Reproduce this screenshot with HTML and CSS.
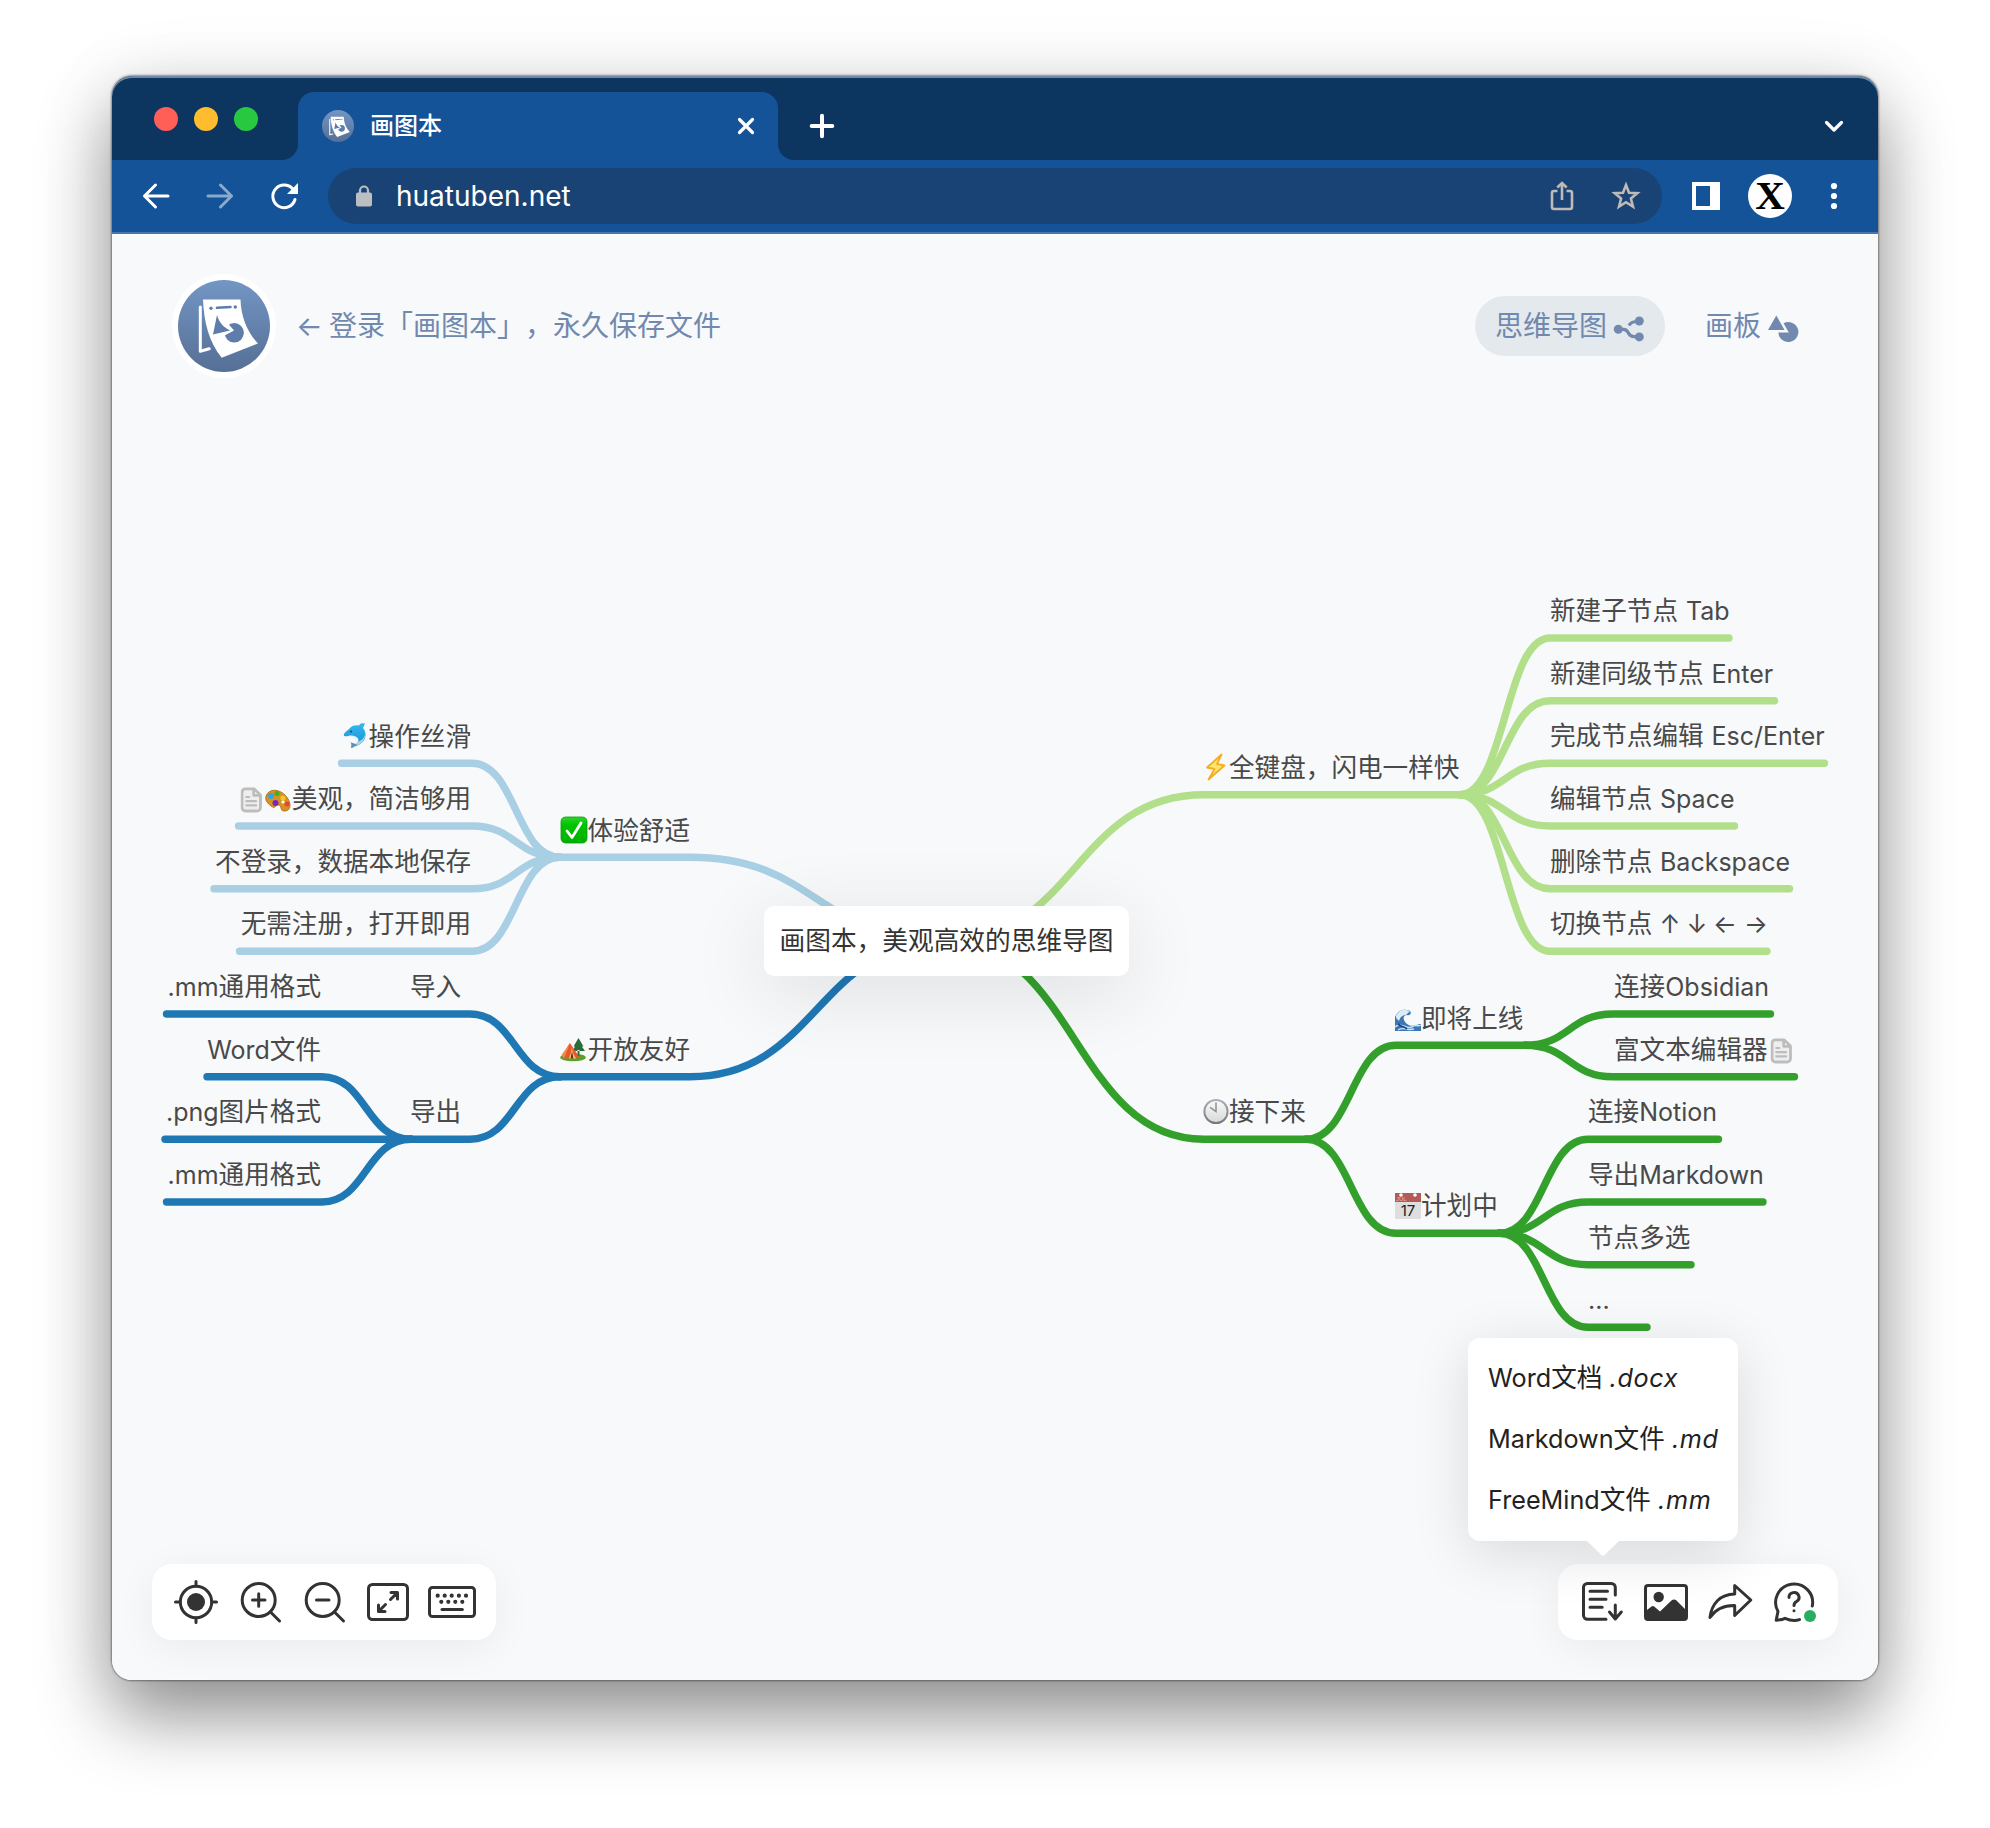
FILE: index.html
```html
<!DOCTYPE html>
<html lang="zh-CN">
<head>
<meta charset="utf-8">
<title>画图本</title>
<link rel="stylesheet" href="styles.css">
</head>
<body>
<svg class="defs" width="0" height="0" aria-hidden="true">
  <defs>
    <linearGradient id="logo-bg" x1="0" y1="0" x2="0" y2="1"><stop offset="0" stop-color="#7396c4"/><stop offset="1" stop-color="#566f96"/></linearGradient>
    <linearGradient id="check-bg" x1="0" y1="0" x2="0" y2="1"><stop offset="0" stop-color="#2fd52f"/><stop offset=".3" stop-color="#00c400"/><stop offset="1" stop-color="#00b000"/></linearGradient>
    <linearGradient id="clock-rim" x1="0" y1="0" x2="0" y2="1"><stop offset="0" stop-color="#a9afbb"/><stop offset="1" stop-color="#777"/></linearGradient>
    <linearGradient id="clock-face" x1="0" y1="0" x2="0" y2="1"><stop offset="0" stop-color="#fafafa"/><stop offset="1" stop-color="#d8d8d8"/></linearGradient>
    <linearGradient id="dolphin-skin" x1="0" y1="0" x2="0" y2="1"><stop offset="0" stop-color="#35b8ef"/><stop offset="1" stop-color="#1690cf"/></linearGradient>
    <symbol id="logo" viewBox="-46 -46 92 92">
      <circle r="46" fill="url(#logo-bg)"/>
      <path d="M-23.7-19V25.3L-14.8 22.8" fill="none" stroke="#fff" stroke-width="3" stroke-linecap="round" stroke-linejoin="round"/>
      <path d="M-21-26.5H16.5C17-8 24 7 34 17.5L-2.3 31.7C-15 16-20-3-21-26.5Z" fill="#fff"/>
      <g fill="#5f7dab"><circle cx="-13" cy="-17.7" r="1.7"/><circle cx="11.3" cy="-19" r="1.7"/><circle cx="10.2" cy="6.8" r="9.7"/></g>
      <path d="M-7-18.2L6.5-19" stroke="#5f7dab" stroke-width="2.6" stroke-linecap="round"/>
      <path d="M-6-14L10 4.5L-4 12L-14 10Z" fill="#fff"/>
      <path d="M-7-11L-11 8.5L6 4.5C-1 1-5-4-7-11Z" fill="#5f7dab"/>
    </symbol>
    <symbol id="note" viewBox="0 0 22 26">
      <path d="M5 1.8H13.5L20 8V20.5a3.5 3.5 0 0 1-3.5 3.5H5a3.5 3.5 0 0 1-3.5-3.5V5.3A3.5 3.5 0 0 1 5 1.8ZM13.2 2V8.3H20" fill="#eee" stroke="#bdbdbd" stroke-width="2.8" stroke-linejoin="round"/>
      <path d="M5.8 10h3M5.8 14.2h9.8M5.8 18.4h9.8" stroke="#bdbdbd" stroke-width="2.2" stroke-linecap="round"/>
    </symbol>
  </defs>
</svg>

<main class="window">
  <header class="tabstrip">
    <div class="lights"><i class="light red"></i><i class="light yellow"></i><i class="light green"></i></div>
    <div class="tab">
      <svg class="favicon"><use href="#logo"/></svg>
      <span class="tab-title">画图本</span>
      <svg class="tab-close" viewBox="-10 -10 20 20"><path d="M-6.5-6.5L6.5 6.5M6.5-6.5L-6.5 6.5"/></svg>
    </div>
    <svg class="new-tab" viewBox="-14 -14 28 28"><path d="M-10.3 0H10.3M0-10.3V10.3"/></svg>
    <svg class="tab-menu" viewBox="-12 -12 24 24"><path d="M-7.5-3.5L0 4L7.5-3.5"/></svg>
  </header>

  <nav class="toolbar">
    <svg class="nav-icon" viewBox="-16 -16 32 32"><path d="M12 0H-11.5M-.5-11L-11.5 0L-.5 11"/></svg>
    <svg class="nav-icon dim" viewBox="-16 -16 32 32"><path d="M-12 0H11.5M.5-11L11.5 0L.5 11"/></svg>
    <svg class="nav-icon" viewBox="-16 -16 32 32"><path d="M9.5-6A11.3 11.3 0 1 0 11 3.5"/><path d="M14-13V-2H3Z" class="solid"/></svg>
    <div class="omnibox">
      <svg class="lock" viewBox="0 0 16 22"><rect y="7.5" width="16" height="14" rx="2"/><path d="M4 8V5.5a4 4 0 0 1 8 0V8"/></svg>
      <span class="url">huatuben.net</span>
      <svg class="share" viewBox="-12 -16 24 32"><path d="M-4.500-5H-8a2 2 0 0 0-2 2V11a2 2 0 0 0 2 2H8a2 2 0 0 0 2-2V-3a2 2 0 0 0-2-2H4.500M0 4V-13M-4.700-8.500L0-13L4.700-8.500"/></svg>
      <svg class="star" viewBox="-16 -16 32 32"><path d="M0-11L3-3.300L11.300-2.800L4.900 2.500L7 10.700L0 6.200L-7 10.700L-4.900 2.500L-11.300-2.800L-3-3.300Z"/></svg>
    </div>
    <svg class="panel" viewBox="0 0 28 28"><path fill-rule="evenodd" d="M0 0H28V28H0ZM4 4V24H18V4Z"/></svg>
    <div class="avatar"><span>X</span></div>
    <svg class="kebab" viewBox="0 0 8 28"><circle cx="4" cy="4" r="3.100"/><circle cx="4" cy="14" r="3.100"/><circle cx="4" cy="24" r="3.100"/></svg>
  </nav>

  <section class="page">
    <svg class="map" viewBox="112 234 1766 1446">
      <g class="links">
        <g stroke="#b2e08a">
          <path d="M946 941C1075 941 1075 794.700 1204 794.700H1460"/>
          <path d="M1460 794.700C1505 794.700 1505 638 1550 638H1729"/>
          <path d="M1460 794.700C1505 794.700 1505 700.700 1550 700.700H1774.500"/>
          <path d="M1460 794.700C1505 794.700 1505 763.300 1550 763.300H1824.500"/>
          <path d="M1460 794.700C1505 794.700 1505 826 1550 826H1734.500"/>
          <path d="M1460 794.700C1505 794.700 1505 888.700 1550 888.700H1789.500"/>
          <path d="M1460 794.700C1505 794.700 1505 951.300 1550 951.300H1767"/>
        </g>
        <g stroke="#33a02c">
          <path d="M946 941C1075 941 1075 1139.300 1204 1139.300H1306"/>
          <path d="M1306 1139.300C1351 1139.300 1351 1045.300 1396 1045.300H1525"/>
          <path d="M1525 1045.300C1569 1045.300 1569 1014 1613 1014H1770.500"/>
          <path d="M1525 1045.300C1569 1045.300 1569 1076.700 1613 1076.700H1794.500"/>
          <path d="M1306 1139.300C1351 1139.300 1351 1233.300 1396 1233.300H1499"/>
          <path d="M1499 1233.300C1544 1233.300 1544 1139.300 1588 1139.300H1718.500"/>
          <path d="M1499 1233.300C1544 1233.300 1544 1202 1588 1202H1763"/>
          <path d="M1499 1233.300C1544 1233.300 1544 1264.700 1588 1264.700H1691"/>
          <path d="M1499 1233.300C1544 1233.300 1544 1327.300 1588 1327.300H1647"/>
        </g>
        <g stroke="#a8cfe4">
          <path d="M946 941C817 941 817 857.300 690 857.300H560"/>
          <path d="M560 857.300C516 857.300 516 763.300 472 763.300H341.500"/>
          <path d="M560 857.300C516 857.300 516 826 472 826H238.500"/>
          <path d="M560 857.300C516 857.300 516 888.700 472 888.700H214"/>
          <path d="M560 857.300C516 857.300 516 951.300 472 951.300H239.500"/>
        </g>
        <g stroke="#1f78b4">
          <path d="M946 941C817 941 817 1076.700 690 1076.700H560"/>
          <path d="M560 1076.700C515 1076.700 515 1014 470 1014H166.500"/>
          <path d="M560 1076.700C515 1076.700 515 1139.300 470 1139.300H411"/>
          <path d="M411 1139.300C366 1139.300 366 1076.700 322 1076.700H207"/>
          <path d="M411 1139.300H165"/>
          <path d="M411 1139.300C366 1139.300 366 1202 322 1202H166.500"/>
        </g>
      </g>

      <g class="labels">
        <text x="1550" y="620">新建子节点<tspan class="en" x="1686">Tab</tspan></text>
        <text x="1550" y="682.500">新建同级节点<tspan class="en" x="1711.500">Enter</tspan></text>
        <text x="1550" y="745">完成节点编辑<tspan class="en" x="1711.500">Esc/Enter</tspan></text>
        <text x="1550" y="808">编辑节点<tspan class="en" x="1660">Space</tspan></text>
        <text x="1550" y="870.500">删除节点<tspan class="en" x="1660">Backspace</tspan></text>
        <text x="1550" y="933">切换节点</text>
        <text class="en mid" y="933"><tspan x="1670">↑</tspan><tspan x="1697">↓</tspan><tspan x="1725">←</tspan><tspan x="1756">→</tspan></text>
        <text x="1229" y="776.500">全键盘，闪电一样快</text>
        <text x="1614" y="996">连接<tspan class="en">Obsidian</tspan></text>
        <text x="1614" y="1058.500">富文本编辑器</text>
        <text x="1421" y="1027.500">即将上线</text>
        <text x="1229" y="1121">接下来</text>
        <text x="1588" y="1121">连接<tspan class="en">Notion</tspan></text>
        <text x="1588" y="1184">导出<tspan class="en">Markdown</tspan></text>
        <text x="1588" y="1246.500">节点多选</text>
        <text class="en" x="1588" y="1309">...</text>
        <text x="1421" y="1215">计划中</text>
        <text class="end" x="471" y="745.500">操作丝滑</text>
        <text class="end" x="471" y="808">美观，简洁够用</text>
        <text class="end" x="471" y="870.500">不登录，数据本地保存</text>
        <text class="end" x="471" y="933">无需注册，打开即用</text>
        <text class="end" x="690" y="839.500">体验舒适</text>
        <text class="end" x="690" y="1058.500">开放友好</text>
        <text x="410" y="996">导入</text>
        <text x="410" y="1121">导出</text>
        <text class="end" x="321" y="996"><tspan class="en">.mm</tspan>通用格式</text>
        <text class="end" x="321" y="1058.500"><tspan class="en">Word</tspan>文件</text>
        <text class="end" x="321" y="1121"><tspan class="en">.png</tspan>图片格式</text>
        <text class="end" x="321" y="1184"><tspan class="en">.mm</tspan>通用格式</text>
      </g>

      <use href="#note" x="240.500" y="787" width="22" height="26"/>
      <use href="#note" x="1770.500" y="1038" width="22" height="26"/>

      <g transform="translate(343 723)">
        <path d="M1 13C0 10 4 8 6 6C9 2 13 2 16 2.500C17 0 20 0 22 .5L20 5C25 11 23 20 12 23.500C17 18 16 15 13 14C9 12 5 14 1 13Z" fill="url(#dolphin-skin)"/>
        <path d="M5 12.500C10 12 16 13 15 18C14 16 12 14.500 9 14Z" fill="#d9eef8"/>
        <path d="M22 12C22 18 17 22 12 23L14 19C18 18 20 16 22 12Z" fill="#a9d4ea"/>
        <path d="M13 21C9 20 7 18 8 20C9 23 7 25 9 25C11 24 12 23 14 22Z" fill="#5d91b5"/>
        <circle cx="8" cy="8.500" r=".9" fill="#134"/>
      </g>
      <g transform="translate(265 789)">
        <path d="M1 7C4-1 14 0 20 6C27 13 27 23 18 22C15 21 17 17 14 16C10 15 11 21 6 17C2 14 0 11 1 7Z" fill="#d9921d" stroke="#a9690e" stroke-width=".8"/>
        <circle cx="6" cy="7" r="3" fill="#32a6dc"/><circle cx="12" cy="4.500" r="2.600" fill="#3db32b"/><circle cx="18" cy="9" r="2.600" fill="#f3c62a"/><circle cx="10.500" cy="14" r="3" fill="#7a24c8"/><circle cx="22" cy="15" r="2.500" fill="#e8463c"/><circle cx="18" cy="13" r="1.600" fill="#fff"/>
      </g>
      <g transform="translate(561 817)">
        <rect width="26" height="26" rx="4.500" fill="url(#check-bg)" stroke="#079c10" stroke-width=".8"/>
        <path d="M6 14L11 20.500L20 6" fill="none" stroke="#fff" stroke-width="2.800" stroke-linecap="round" stroke-linejoin="round"/>
      </g>
      <g transform="translate(560 1038)">
        <ellipse cx="13" cy="19.500" rx="12.800" ry="3.800" fill="#5d9e2b"/>
        <path d="M18.500 0L13.500 8.500H15L12.500 13H25L21.800 8.500H23.500ZM17.500 12H19.500V18H17.500Z" fill="#2b6b3a"/>
        <path d="M10 5L19.500 19.500L4 20.500C4 15 7 9 10 5Z" fill="#e9572b"/>
        <path d="M10 5L4 20.500L1.500 17Z" fill="#f2894e"/>
        <path d="M12 9C12 14 14 18 16 20.500H9C10.500 17 11.500 13 12 9Z" fill="#f7d489"/>
        <path d="M12 13L13.500 20.500H10.500Z" fill="#6b2c13"/>
      </g>
      <path d="M1221.500 754.500L1207 767.500L1214.500 769L1208.500 779.500L1224.500 765.500L1217 764Z" fill="#fee571" stroke="#f6ad20" stroke-width="1.800" stroke-linejoin="round"/>
      <g transform="translate(1395 1009)">
        <path d="M0 22V8C3 1 9-1 15 2C17 4 15 7 12 6C8 6 7 11 12 15C17 19 22 15 26 15V22Z" fill="#3c76b3"/>
        <path d="M1 7C4 0 11-1 15 3C12 3 13 6 10 6C6 7 5 9 4 12C3 10 1 11 1 7Z" fill="#dcebf5"/>
        <path d="M0 18C6 12 11 21 17 18C21 15 23 18 26 16M3 21C9 17 12 22 19 20" fill="none" stroke="#c8e0f2" stroke-width="1.500"/>
        <path d="M3 15C6 18 9 17 12 20" fill="none" stroke="#164b8a" stroke-width="1.800"/>
      </g>
      <g transform="translate(1216 1111.500)">
        <circle r="11.600" fill="url(#clock-face)" stroke="url(#clock-rim)" stroke-width="2"/>
        <path d="M0-8.500V0L-5.500-3.800" fill="none" stroke="#8d9095" stroke-width="1.500" stroke-linecap="round"/>
      </g>
      <g transform="translate(1395 1193)">
        <path d="M0 0H26V26H0Z" fill="#dedede"/><path d="M0 0H26V9H0Z" fill="#b35a58"/>
        <circle cx="6" cy="2" r="1.800" fill="#fff"/><circle cx="20" cy="2" r="1.800" fill="#fff"/>
        <text class="cal-month" x="1" y="8.300">JUL</text>
        <text class="cal-day" x="13" y="22.800">17</text>
      </g>
    </svg>
    <div class="root-node">画图本，美观高效的思维导图</div>

    <header class="page-head">
      <div class="brand"><svg><use href="#logo"/></svg></div>
      <a class="login"><span class="arrow">←</span>登录「画图本」，永久保存文件</a>
      <div class="modes">
        <a class="mode active">思维导图
          <svg viewBox="0 0 32 32"><g fill="#7189ae"><circle cx="5.300" cy="16.300" r="4.500"/><circle cx="26.300" cy="8" r="4.500"/><circle cx="26.300" cy="23.900" r="4.500"/></g><path d="M5 16.300H10.500C17 16.300 13.500 23.700 21 23.700H26M16 12.500C17.500 9.500 19.500 8.500 26 8.500" fill="none" stroke="#7189ae" stroke-width="3.200"/></svg>
        </a>
        <a class="mode">画板
          <svg viewBox="0 0 32 32"><path d="M9.300 2.500L1 17H17.600Z" fill="#7189ae"/><path d="M16.500 10.300A10 10 0 1 1 11.400 19.500H21.800Z" fill="#7189ae"/></svg>
        </a>
      </div>
    </header>

    <footer class="page-foot">
      <div class="tools">
        <svg viewBox="-32 -32 64 64"><circle r="15.700"/><circle r="9" class="fill"/><path d="M-20.500 0H-16M20.500 0H16M0-20.500V-16M0 20.500V16"/></svg>
        <svg viewBox="-32 -32 64 64"><circle cx="-1.300" cy="-2" r="16.500"/><path d="M-7.500-2H5M-1.300-8.200V4.200M10.500 10L19.500 19"/></svg>
        <svg viewBox="-32 -32 64 64"><circle cx="-1.300" cy="-2" r="16.500"/><path d="M-7.500-2H5M10.500 10L19.500 19"/></svg>
        <svg viewBox="-32 -32 64 64"><rect x="-19.500" y="-17.500" width="39" height="35" rx="4"/><path d="M3-9.500H9.500V-3M9-9L2.500-2.500M-9.500 3V9.500H-3M-9 9L-2.500 2.500"/></svg>
        <svg viewBox="-32 -32 64 64"><rect x="-22.500" y="-14.500" width="45" height="29" rx="3"/><path d="M-14.300-6.300h0M-7.300-6.300h0M-.3-6.300h0M6.900-6.300h0M14-6.300h0M-10.700-.2h0M-3.700-.2h0M3.300-.2h0M10.300-.2h0" class="dots"/><path d="M-10 7.500H10.300"/></svg>
      </div>
      <div class="tools export">
        <svg viewBox="-32 -32 64 64"><path d="M13.300-7V-14.500a4 4 0 0 0-4-4H-14.500a4 4 0 0 0-4 4V13.300a4 4 0 0 0 4 4H4M-12-10.700H5.500M-12-2.700H4M-12 5.300H.2M13.300 3V16.500M7.500 10L13.300 17L19.300 10"/></svg>
        <svg viewBox="-32 -32 64 64"><rect x="-20.500" y="-16.500" width="41" height="34" rx="2.500"/><circle cx="-7.300" cy="-5" r="5.200" class="fill"/><path class="fill" d="M-21 9.500L-14.500 4.500Q-13 3.500-11.500 4.800L-6 9.500L5.500-1.500Q8-3.700 10.500-1.500L21 9V17.500H-21Z"/></svg>
        <svg viewBox="-32 -32 64 64"><path d="M4.700-16.500L20.800-2L4.700 13.500V3.500C-6 3.300-14 6.500-20 15.500C-18.500 2-10-7.800 4.700-8Z"/></svg>
        <svg viewBox="-32 -32 64 64"><path d="M18.300 4A18.500 18.500 0 1 0-16 9.500Q-17 14-17.800 18.300Q-12 17.800-9 16.300Q-1 19.700 5.500 17.600M-5-4.500A5 4.800 0 1 1 2.500-.5Q0 1 0 3.500M0 8.700h0"/><circle cx="16" cy="14" r="6" class="badge"/></svg>
        <div class="menu">
          <div>Word<b>文档</b> <em>.docx</em></div>
          <div>Markdown<b>文件</b> <em>.md</em></div>
          <div>FreeMind<b>文件</b> <em>.mm</em></div>
        </div>
      </div>
    </footer>
  </section>
</main>
</body>
</html>
```
FILE: styles.css
```css
* { box-sizing: border-box; }

body {
  margin: 0;
  padding: 76px 112px 148px;
  background: #fff;
  font-family: Inter, "Noto Sans CJK SC", sans-serif;
  text-spacing-trim: space-all;
  overflow: hidden;
}

svg { display: block; flex: none; }
.defs { position: absolute; }

.window {
  display: flex;
  flex-direction: column;
  width: 1766px;
  height: 1604px;
  border-radius: 20px;
  box-shadow: 0 0 2px 1px rgba(0, 0, 0, .4), 0 36px 72px rgba(0, 0, 0, .42), 0 6px 80px rgba(0, 0, 0, .08);
}

/* Tab strip */
.tabstrip {
  display: flex;
  align-items: center;
  height: 84px;
  padding: 16px 32px 0 42px;
  background: #0c3560;
  border-radius: 20px 20px 0 0;
  box-shadow: inset 0 2px 0 #6f87a4;
}
.lights { display: flex; gap: 16px; margin-top: -14px; }
.light { width: 24px; height: 24px; border-radius: 50%; }
.red { background: #ff5f57; }
.yellow { background: #febc2e; }
.green { background: #28c840; }

.tab {
  position: relative;
  display: flex;
  align-items: center;
  width: 480px;
  height: 68px;
  margin-left: 40px;
  padding: 0 22px 0 24px;
  background: #155399;
  border-radius: 16px 16px 0 0;
}
.tab::before, .tab::after {
  content: "";
  position: absolute;
  bottom: 0;
  width: 16px;
  height: 16px;
}
.tab::before { left: -16px; background: radial-gradient(circle at 0 0, #0c3560 15.5px, #155399 16.5px); }
.tab::after { right: -16px; background: radial-gradient(circle at 100% 0, #0c3560 15.5px, #155399 16.5px); }
.favicon { width: 32px; height: 32px; }
.tab-title { margin-left: 16px; color: #fff; font-size: 24px; line-height: 34px; font-weight: 500; }
.tab-close { width: 20px; height: 20px; margin-left: auto; }
.new-tab { width: 28px; height: 28px; margin-left: 30px; }
.tab-menu { width: 24px; height: 24px; margin-left: auto; }
.tab-close, .new-tab, .tab-menu { fill: none; stroke: #fff; stroke-width: 3.2; stroke-linecap: round; stroke-linejoin: round; }
.new-tab { stroke-width: 4; }

/* Address bar */
.toolbar {
  display: flex;
  align-items: center;
  height: 74px;
  padding: 0 40px 0 28px;
  background: #155399;
  border-bottom: 2px solid #4777b3;
}
.nav-icon { width: 32px; height: 32px; margin-right: 32px; fill: none; stroke: #fff; stroke-width: 3; stroke-linecap: round; stroke-linejoin: round; }
.nav-icon.dim { opacity: .5; }
.nav-icon .solid { fill: #fff; stroke: none; }
.omnibox {
  display: flex;
  align-items: center;
  width: 1334px;
  height: 56px;
  margin-left: -4px;
  padding: 0 20px 0 28px;
  border-radius: 28px;
  background: #1a4375;
}
.lock { width: 16px; height: 22px; fill: #bcbfc2; }
.lock path { fill: none; stroke: #bcbfc2; stroke-width: 2.2; }
.url { margin-left: 24px; color: #fff; font: 28px/36px Inter, sans-serif; }
.share { width: 24px; height: 32px; margin-left: auto; }
.star { width: 32px; height: 32px; margin-left: 36px; }
.share, .star { fill: none; stroke: #bdbab8; stroke-width: 2.6; }
.panel { width: 28px; height: 28px; margin-left: 30px; fill: #fff; }
.avatar {
  display: flex;
  align-items: center;
  justify-content: center;
  width: 44px;
  height: 44px;
  margin-left: 28px;
  border-radius: 50%;
  background: #fff;
  color: #000;
  font: bold 41px/42px "Liberation Serif", serif;
}
.avatar span { margin-top: -2px; }
.kebab { width: 8px; height: 28px; margin-left: auto; fill: #fff; }

/* Page */
.page {
  position: relative;
  display: flex;
  flex-direction: column;
  justify-content: space-between;
  flex: 1;
  padding: 40px;
  background: #f8f9fb;
  border-radius: 0 0 20px 20px;
  overflow: hidden;
}
.map { position: absolute; inset: 0; width: 1766px; height: 1446px; }
.links { fill: none; stroke-width: 7.4; stroke-linecap: round; }
.labels { fill: #494949; font: 25.6px "Noto Sans CJK SC", sans-serif; }
.en { font-family: Inter, sans-serif; font-size: 25px; }
.mid { text-anchor: middle; }
.end { text-anchor: end; }
.cal-month { fill: #e3b5b3; font: 6px "Liberation Sans", sans-serif; }
.cal-day { fill: #222; font: 15px Inter, sans-serif; text-anchor: middle; }

.root-node {
  position: absolute;
  left: 652px;
  top: 672px;
  width: 365px;
  height: 70px;
  border-radius: 10px;
  background: #fff;
  box-shadow: 0 16px 80px rgba(0, 0, 0, .11);
  color: #333;
  font: 25.7px/66px "Noto Sans CJK SC", sans-serif;
  text-align: center;
  white-space: nowrap;
}

.page-head { position: relative; display: flex; align-items: center; height: 104px; margin: 0 19px 0 20px; color: #7189ae; font: 28px/40px Inter, "Noto Sans CJK SC", sans-serif; }
.brand { width: 104px; height: 104px; padding: 6px; border-radius: 50%; background: #fff; }
.brand svg { width: 92px; height: 92px; }
.login { display: flex; margin-left: 20px; white-space: nowrap; }
.arrow { width: 33px; font-size: 28px; }
.modes { display: flex; gap: 20px; margin-left: auto; }
.mode { display: flex; align-items: center; gap: 6px; height: 60px; padding: 0 20px; border-radius: 30px; white-space: nowrap; }
.mode.active { background: #e4e9ed; }
.mode svg { width: 32px; height: 32px; margin-top: 5px; }

.page-foot { position: relative; display: flex; justify-content: space-between; }
.tools { position: relative; display: flex; height: 76px; padding: 6px 12px; border-radius: 20px; background: #fff; box-shadow: 0 8px 40px rgba(0, 0, 0, .06); }
.tools svg { width: 64px; height: 64px; fill: none; stroke: #333; stroke-width: 3; stroke-linecap: round; stroke-linejoin: round; }
.tools .fill { fill: #333; stroke: none; }
.tools .dots { stroke-width: 4.2; }
.tools .badge { fill: #27ae60; stroke: #fff; stroke-width: 3; paint-order: stroke; }

.menu {
  position: absolute;
  right: 100px;
  bottom: 99px;
  width: 270px;
  height: 203px;
  padding: 10px 20px;
  border-radius: 12px;
  background: #fff;
  box-shadow: 0 12px 56px rgba(0, 0, 0, .13);
  color: #222;
  font-size: 25.2px;
  line-height: 61px;
  white-space: nowrap;
}
.menu b { font: 25.6px/30px "Noto Sans CJK SC", sans-serif; }
.menu em { letter-spacing: .7px; }
.menu::after {
  content: "";
  position: absolute;
  left: 119px;
  top: 100%;
  width: 32px;
  height: 15px;
  background: #fff;
  clip-path: polygon(0 0, 100% 0, 55% 93%, 50% 100%, 45% 93%);
}
```
